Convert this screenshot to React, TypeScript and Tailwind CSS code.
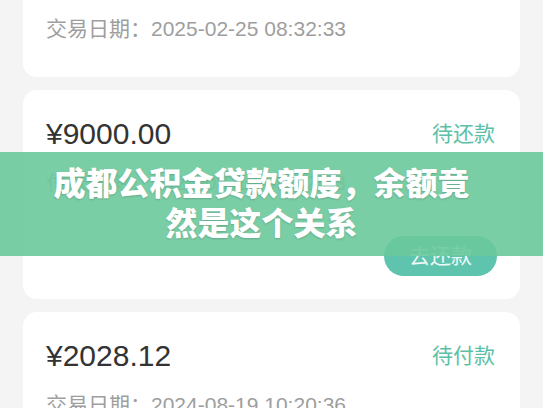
import React from 'react';

const font = "font-['Liberation_Sans','Noto_Sans_CJK_SC',sans-serif]";

const DateRow = ({ label, value }: { label: string; value: string }) => (
  <div className="h-[30px] flex items-center text-[21px] leading-[30px] text-[#9e9e9e]">
    {label}：{value}
  </div>
);

const AmountRow = ({ amount, status }: { amount: string; status: string }) => (
  <div className="h-[36px] flex items-center justify-between">
    <span className="text-[30px] leading-[36px] text-[#333333]">{amount}</span>
    <span className="text-[21px] text-[#5cc0a6]">{status}</span>
  </div>
);

const App = () => {
  return (
    <div className={`relative h-[408px] w-[543px] overflow-hidden bg-[#f4f4f4] ${font}`}>
      <div className="flex flex-col gap-[13px] px-[23px]">
        {/* 上一条记录（顶部被裁切） */}
        <div className="bg-white rounded-b-[14px] pl-[23px] pr-[25px] pt-[14px] pb-[33px]">
          <DateRow label="交易日期" value="2025-02-25 08:32:33" />
        </div>

        <div className="bg-white rounded-[14px] pl-[23px] pr-[25px] pt-[26px] pb-[23px]">
          <AmountRow amount="¥9000.00" status="待还款" />
          <div className="mt-[16px]">
            <DateRow label="付款日期" value="2024-08-19 08:32:33" />
          </div>
          <div className="mt-[38px] flex justify-end -mr-[2px]">
            <button className="h-[40px] w-[113px] rounded-full bg-[#5ec4ae] text-[21px] text-white/90">
              去还款
            </button>
          </div>
        </div>

        <div className="bg-white rounded-t-[14px] pl-[23px] pr-[25px] pt-[26px] pb-[23px]">
          <AmountRow amount="¥2028.12" status="待付款" />
          <div className="mt-[16px]">
            <DateRow label="交易日期" value="2024-08-19 10:20:36" />
          </div>
        </div>
      </div>

      {/* 标题横幅 */}
      <div className="absolute left-0 right-0 top-[152px] h-[104px] bg-[#6cc99c]/90 flex items-center justify-center pr-[20px]">
        <h1 className="text-center text-[32px] leading-[40px] font-black text-white [text-shadow:0_1px_2px_rgba(0,0,0,0.18)]">
          成都公积金贷款额度，余额竟
          <br />
          然是这个关系
        </h1>
      </div>
    </div>
  );
};

export default App;
